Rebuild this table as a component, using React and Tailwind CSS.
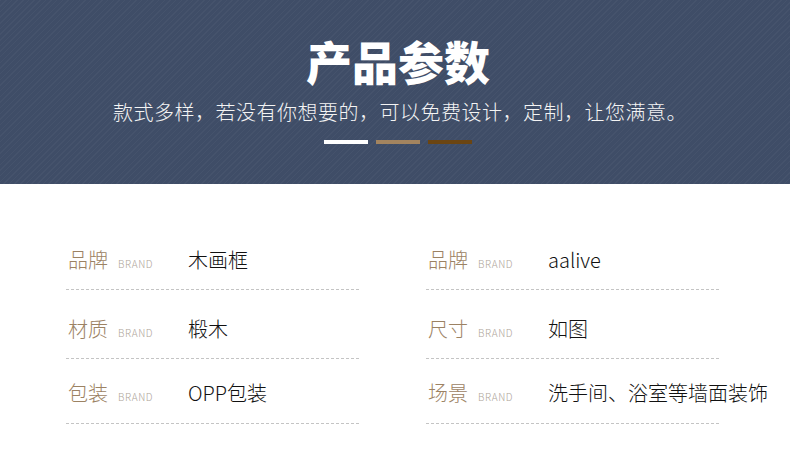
import React from 'react';

const rows = [
  [
    { label: '品牌', value: '木画框' },
    { label: '品牌', value: 'aalive' },
  ],
  [
    { label: '材质', value: '椴木' },
    { label: '尺寸', value: '如图' },
  ],
  [
    { label: '包装', value: 'OPP包装' },
    { label: '场景', value: '洗手间、浴室等墙面装饰' },
  ],
];

const rowSpacing = ['mt-[61px] pb-[14px]', 'mt-[24px] pb-[14px]', 'mt-[19px] pb-[15px]'];

function Cell({ label, value, spacing }) {
  return (
    <div className={spacing}>
      <div className="flex items-baseline h-[30px] leading-[30px]">
        <span className="text-[20px] font-light text-[#9c8263] w-[50px] shrink-0">{label}</span>
        <span className="text-[10px] font-light text-[#aea498] tracking-[0.6px] w-[70px] shrink-0">BRAND</span>
        <span className="text-[20px] font-light text-[#111] whitespace-nowrap">{value}</span>
      </div>
    </div>
  );
}

function Dashes() {
  return (
    <div className="h-px bg-[linear-gradient(to_right,#c4c4c4_60%,transparent_0)] bg-[length:5px_1px] bg-repeat-x" />
  );
}

function App() {
  return (
    <div
      className="w-[790px] h-[466px] bg-white overflow-hidden"
      style={{ fontFamily: '"Noto Sans CJK SC", "Noto Sans", sans-serif' }}
    >
      <div className="h-[184px] bg-[#3f4d67] bg-[repeating-linear-gradient(135deg,rgba(255,255,255,0.03)_0px,rgba(255,255,255,0.03)_1px,transparent_1px,transparent_4px)] flex flex-col items-center pt-[37px] pl-[6px]">
        <h1 className="text-[46px] leading-[46px] font-black text-white">产品参数</h1>
        <p className="mt-[15px] text-[20px] leading-[28px] font-light text-[#f4f4f4] tracking-[0.5px] pl-[4px]">
          款式多样，若没有你想要的，可以免费设计，定制，让您满意。
        </p>
        <div className="mt-[14px] flex gap-[8px]">
          <div className="w-[44px] h-[4px] bg-white" />
          <div className="w-[44px] h-[4px] bg-[#a3845f]" />
          <div className="w-[44px] h-[4px] bg-[#6b4512]" />
        </div>
      </div>

      <div className="pl-[66px] grid grid-cols-[294px_293px] gap-x-[66px]">
        {[0, 1].map((col) => (
          <div key={col} className="flex flex-col">
            {rows.map((row, i) => (
              <div key={i}>
                <div className="pl-[2px]">
                  <Cell label={row[col].label} value={row[col].value} spacing={rowSpacing[i]} />
                </div>
                <Dashes />
              </div>
            ))}
          </div>
        ))}
      </div>
    </div>
  );
}

export default App;
